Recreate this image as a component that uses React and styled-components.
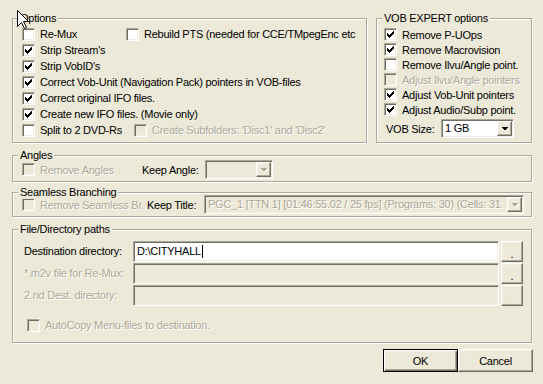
import React from 'react';
import styled, { createGlobalStyle, css } from 'styled-components';

const GlobalStyle = createGlobalStyle`
  html, body {
    margin: 0;
    padding: 0;
    background: #ece9d8;
  }
  body {
    font-family: "Liberation Sans", Arial, sans-serif;
    font-size: 11px;
    letter-spacing: -0.25px;
    color: #000;
  }
`;

const raised = css`
  border: 1px solid;
  border-color: #fff #716f64 #716f64 #fff;
  box-shadow: inset -1px -1px 0 #aca899, inset 1px 1px 0 #f1efe2;
  background: #ece9d8;
`;

const sunken = css`
  border: 1px solid;
  border-color: #aca899 #fff #fff #aca899;
  box-shadow: inset 1px 1px 0 #716f64, inset -1px -1px 0 #f1efe2;
`;

const grey = css`
  color: #aca899;
  text-shadow: 1px 1px 0 #fff;
`;

const Dialog = styled.div`
  position: relative;
  width: 543px;
  height: 384px;
  box-sizing: border-box;
  padding: 18px 11px 0 12px;
  background: #ece9d8;
  display: flex;
  flex-direction: column;
  overflow: hidden;
`;

const TopRow = styled.div`
  display: flex;
  gap: 9px;
  height: 125px;
  flex: none;
`;

const Group = styled.div`
  position: relative;
  box-sizing: border-box;
  border: 1px solid #aca899;
  box-shadow: 1px 1px 0 #fff, inset 1px 1px 0 #fff;
  margin-top: ${p => p.$mt || 0}px;
  height: ${p => p.$h}px;
  width: ${p => (p.$w ? `${p.$w}px` : 'auto')};
  flex: ${p => (p.$grow ? '1' : 'none')};
  padding: ${p => p.$pad};
`;

const Caption = styled.span`
  position: absolute;
  top: -7px;
  left: 5px;
  padding: 0 2px;
  line-height: 13px;
  background: #ece9d8;
  white-space: nowrap;
`;

const Line = styled.div`
  display: flex;
  align-items: center;
  height: ${p => p.$h || 16}px;
  margin-top: ${p => p.$mt || 0}px;
`;

const CheckRow = styled.div`
  display: flex;
  align-items: center;
  gap: 5px;
  height: ${p => p.$h || 16}px;
  width: ${p => (p.$w ? `${p.$w}px` : 'auto')};
  flex: none;
  margin-left: ${p => p.$ml || 0}px;
  white-space: nowrap;
  ${p => p.$disabled && grey}
`;

const Box = styled.span`
  width: 13px;
  height: 13px;
  box-sizing: border-box;
  flex: none;
  ${sunken}
  background: ${p => (p.$disabled ? '#ece9d8' : '#fff')};
  display: flex;
  align-items: center;
  justify-content: center;
`;

const Label = styled.span`
  width: ${p => (p.$w ? `${p.$w}px` : 'auto')};
  padding-left: ${p => p.$pl || 0}px;
  box-sizing: border-box;
  flex: none;
  white-space: nowrap;
  ${p => p.$disabled && grey}
`;

const Combo = styled.div`
  box-sizing: border-box;
  width: ${p => p.$w}px;
  height: 19px;
  padding: 1px;
  flex: none;
  ${sunken}
  background: ${p => (p.$disabled ? '#ece9d8' : '#fff')};
  display: flex;
  align-items: stretch;
`;

const ComboText = styled.span`
  flex: 1;
  min-width: 0;
  overflow: hidden;
  white-space: nowrap;
  padding-left: 2px;
  line-height: 15px;
  ${p => p.$disabled && grey}
`;

const DropBtn = styled.span`
  box-sizing: border-box;
  width: 15px;
  flex: none;
  ${raised}
  display: flex;
  align-items: center;
  justify-content: center;
`;

const PathRow = styled.div`
  display: flex;
  align-items: center;
  height: 22px;
  gap: 2px;
`;

const Field = styled.div`
  flex: 1;
  box-sizing: border-box;
  height: 21px;
  padding: 0 3px;
  ${sunken}
  background: ${p => (p.$disabled ? '#ece9d8' : '#fff')};
  display: flex;
  align-items: center;
  white-space: nowrap;
`;

const Caret = styled.span`
  display: inline-block;
  width: 1px;
  height: 13px;
  background: #000;
  margin-left: 1px;
`;

const DotButton = styled.div`
  box-sizing: border-box;
  width: 22px;
  height: 21px;
  flex: none;
  ${raised}
  display: flex;
  align-items: flex-end;
  justify-content: center;
  padding-bottom: 3px;
  line-height: 8px;
  ${p => p.$disabled && grey}
`;

const ButtonRow = styled.div`
  display: flex;
  justify-content: flex-end;
  margin-top: 6px;
  margin-right: -1px;
`;

const PushButton = styled.div`
  box-sizing: border-box;
  width: 75px;
  height: 23px;
  display: flex;
  align-items: center;
  justify-content: center;
  ${raised}
  ${p =>
    p.$default &&
    css`
      border: 1px solid #000;
      box-shadow: inset 1px 1px 0 #fff, inset -1px -1px 0 #716f64,
        inset -2px -2px 0 #aca899;
    `}
`;

const Cursor = styled.svg`
  position: absolute;
  left: 17px;
  top: 10px;
`;

const tick = [
  [6, 0, 1], [5, 1, 2], [0, 2, 1], [4, 2, 3], [0, 3, 2], [3, 3, 3],
  [0, 4, 5], [1, 5, 3], [2, 6, 1],
];

function Tick({ color = '#000' }) {
  return (
    <svg width="7" height="7" viewBox="0 0 7 7" shapeRendering="crispEdges">
      {tick.map(([x, y, w], i) => (
        <rect key={i} x={x} y={y} width={w} height="1" fill={color} />
      ))}
    </svg>
  );
}

function Checkbox({ checked, disabled, children, w, ml, h }) {
  return (
    <CheckRow $disabled={disabled} $w={w} $ml={ml} $h={h}>
      <Box $disabled={disabled}>{checked && <Tick color={disabled ? '#aca899' : '#000'} />}</Box>
      <span>{children}</span>
    </CheckRow>
  );
}

function Arrow({ disabled }) {
  return (
    <svg width="8" height="5" viewBox="0 0 8 5" shapeRendering="crispEdges">
      {disabled && <path d="M2 1h7l-3.5 4z" fill="#fff" />}
      <path d="M0.5 0.5h7l-3.5 4z" fill={disabled ? '#aca899' : '#000'} />
    </svg>
  );
}

function DropDown({ w, value, disabled }) {
  return (
    <Combo $w={w} $disabled={disabled}>
      <ComboText $disabled={disabled}>{value}</ComboText>
      <DropBtn>
        <Arrow disabled={disabled} />
      </DropBtn>
    </Combo>
  );
}

const options = [
  'Strip Stream\'s',
  'Strip VobID\'s',
  'Correct Vob-Unit (Navigation Pack) pointers in VOB-files',
  'Correct original IFO files.',
  'Create new IFO files. (Movie only)',
];

const vobOptions = [
  { text: 'Remove P-UOps', checked: true },
  { text: 'Remove Macrovision', checked: true },
  { text: 'Remove Ilvu/Angle point.', checked: false },
  { text: 'Adjust Ilvu/Angle pointers', checked: false, disabled: true },
  { text: 'Adjust Vob-Unit pointers', checked: true },
  { text: 'Adjust Audio/Subp point.', checked: true },
];

export default function App() {
  return (
    <>
      <GlobalStyle />
      <Dialog>
        <TopRow>
          <Group $w={355} $h={125} $pad="7px 0 0 9px">
            <Caption>Options</Caption>
            <Line>
              <Checkbox w={104}>Re-Mux</Checkbox>
              <Checkbox>Rebuild PTS (needed for CCE/TMpegEnc etc</Checkbox>
            </Line>
            {options.map(o => (
              <Checkbox key={o} checked>{o}</Checkbox>
            ))}
            <Line>
              <Checkbox w={112}>Split to 2 DVD-Rs</Checkbox>
              <Checkbox disabled>Create Subfolders: 'Disc1' and 'Disc2'</Checkbox>
            </Line>
          </Group>
          <Group $grow $h={125} $pad="8px 0 0 7px">
            <Caption>VOB EXPERT options</Caption>
            {vobOptions.map(o => (
              <Checkbox key={o.text} h={15} checked={o.checked} disabled={o.disabled}>
                {o.text}
              </Checkbox>
            ))}
            <Line $h={19} $mt={2}>
              <Label $w={57} $pl={2}>VOB Size:</Label>
              <DropDown w={73} value="1 GB" />
            </Line>
          </Group>
        </TopRow>

        <Group $mt={12} $h={27} $pad="4px 0 0 9px">
          <Caption>Angles</Caption>
          <Line $h={19}>
            <Checkbox w={120} disabled>Remove Angles</Checkbox>
            <Label $w={63}>Keep Angle:</Label>
            <DropDown w={68} value="" disabled />
          </Line>
        </Group>

        <Group $mt={10} $h={25} $pad="2px 0 0 9px">
          <Caption>Seamless Branching</Caption>
          <Line $h={19}>
            <Checkbox w={125} disabled>Remove Seamless Br.</Checkbox>
            <Label $w={57}>Keep Title:</Label>
            <DropDown
              w={320}
              disabled
              value="PGC_1 [TTN 1] [01:46:55.02 / 25 fps] (Programs: 30) (Cells: 31"
            />
          </Line>
        </Group>

        <Group $mt={12} $h={114} $pad="10px 8px 0 11px">
          <Caption>File/Directory paths</Caption>
          <PathRow>
            <Label $w={107}>Destination directory:</Label>
            <Field>
              {'D:\\CITYHALL'}
              <Caret />
            </Field>
            <DotButton>.</DotButton>
          </PathRow>
          <PathRow>
            <Label $w={107} $disabled>*.m2v file for Re-Mux:</Label>
            <Field $disabled />
            <DotButton>.</DotButton>
          </PathRow>
          <PathRow>
            <Label $w={107} $disabled>2.nd Dest. directory:</Label>
            <Field $disabled />
            <DotButton $disabled>.</DotButton>
          </PathRow>
          <Line $mt={11}>
            <Checkbox disabled ml={3}>AutoCopy Menu-files to destination.</Checkbox>
          </Line>
        </Group>

        <ButtonRow>
          <PushButton $default>OK</PushButton>
          <PushButton>Cancel</PushButton>
        </ButtonRow>

        <Cursor width="13" height="20" viewBox="0 0 13 20">
          <path
            d="M0.5 0.5V16.5L4.5 12.5L7.5 18.5L9.5 17.5L6.5 11.5H11.5Z"
            fill="#fff"
            stroke="#000"
            strokeWidth="1"
          />
        </Cursor>
      </Dialog>
    </>
  );
}
